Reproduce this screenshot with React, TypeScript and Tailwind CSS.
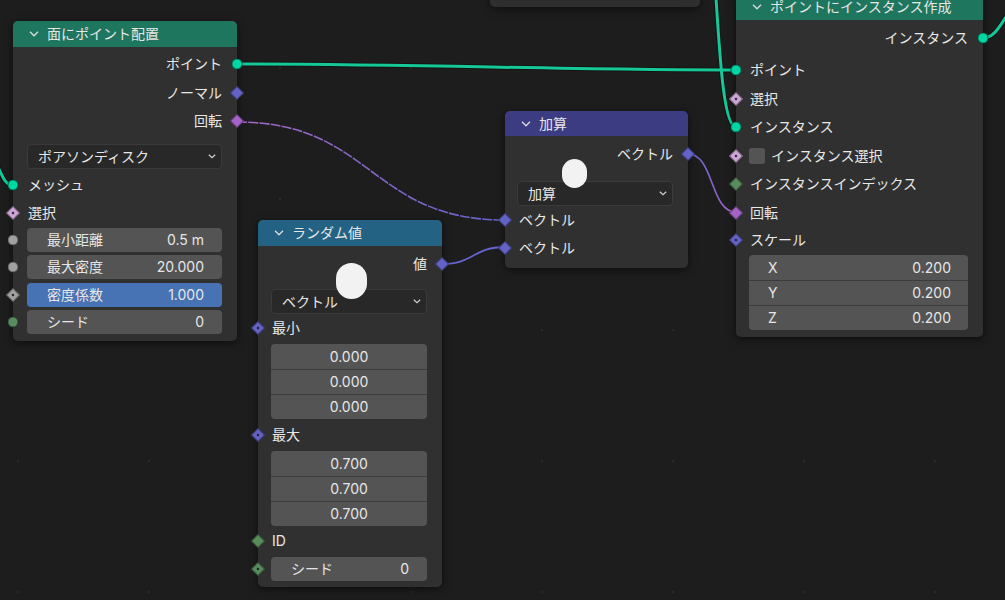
import React from 'react';

type SockProps = { side: 'l' | 'r'; shape: 'c' | 'd'; color: string; dot?: boolean };

function Sock({ side, shape, color, dot }: SockProps) {
  const pos = side === 'l' ? 'left-0 -translate-x-1/2' : 'right-0 translate-x-1/2';
  if (shape === 'c') {
    return (
      <span
        className={`absolute top-1/2 -translate-y-1/2 ${pos} w-[11px] h-[11px] rounded-full border border-black/50 ${color} z-20`}
      />
    );
  }
  return (
    <span className={`absolute top-1/2 -translate-y-1/2 ${pos} w-[14px] h-[14px] flex items-center justify-center z-20`}>
      <span className={`w-[10px] h-[10px] rotate-45 border border-black/40 ${color} flex items-center justify-center`}>
        {dot && <span className="w-[2px] h-[2px] bg-[#1a1a1a]" />}
      </span>
    </span>
  );
}

function Chevron() {
  return (
    <svg width="10" height="6" viewBox="0 0 10 6" className="shrink-0">
      <path d="M1 0.8 L5 4.8 L9 0.8" fill="none" stroke="#dcdcdc" strokeWidth="1.3" />
    </svg>
  );
}

function SmallChevron() {
  return (
    <svg width="8" height="5" viewBox="0 0 8 5" className="shrink-0">
      <path d="M0.8 0.8 L4 3.8 L7.2 0.8" fill="none" stroke="#cfcfcf" strokeWidth="1.2" />
    </svg>
  );
}

function Header({ title, color, h }: { title: string; color: string; h: string }) {
  return (
    <div className={`${h} ${color} rounded-t-[5px] flex items-center pl-[16px] gap-[8px] text-[#e6e6e6]`}>
      <Chevron />
      <span>{title}</span>
    </div>
  );
}

function Dropdown({ label }: { label: string }) {
  return (
    <div className="h-[25px] rounded-[4px] bg-[#282828] border border-[#3a3a3a] flex items-center justify-between pl-[10px] pr-[5px] text-[#e6e6e6]">
      <span>{label}</span>
      <SmallChevron />
    </div>
  );
}

function Field({ label, value, active }: { label: string; value: string; active?: boolean }) {
  return (
    <div
      className={`h-[24px] rounded-[4px] ${active ? 'bg-[#4772b3]' : 'bg-[#545454]'} flex items-center justify-between pl-[20px] pr-[18px] text-[#e6e6e6]`}
    >
      <span>{label}</span>
      <span>{value}</span>
    </div>
  );
}

function VecField({ vals, labels }: { vals: string[]; labels?: string[] }) {
  return (
    <div className="rounded-[4px] overflow-hidden bg-[#545454] flex flex-col text-[#e6e6e6]">
      {vals.map((v, i) => (
        <div
          key={i}
          className={`h-[25px] flex items-center ${labels ? 'justify-between pl-[19px] pr-[17px]' : 'justify-center'} ${i > 0 ? 'border-t border-[#3b3b3b]' : ''}`}
        >
          {labels && <span>{labels[i]}</span>}
          <span>{v}</span>
        </div>
      ))}
    </div>
  );
}

const nodeCls =
  "absolute rounded-[5px] bg-[#303030] shadow-[0_2px_8px_rgba(0,0,0,0.55)] text-[14px] text-[#e8e8e8] leading-none";

export default function App() {
  const dots: React.ReactElement[] = [];
  for (let x = 18; x < 1005; x += 131) {
    for (let y = 68; y < 600; y += 131) {
      dots.push(<circle key={`${x}-${y}`} cx={x} cy={y} r={1.2} fill="#2a2a2a" />);
    }
  }
  return (
    <div className="relative w-[1005px] h-[600px] overflow-hidden bg-[#1d1d1d] font-[Inter,'Noto_Sans_CJK_JP','Noto_Sans',sans-serif]">
      {/* links */}
      <svg className="absolute inset-0" width="1005" height="600" viewBox="0 0 1005 600">
        <defs>
          <linearGradient id="g1" gradientUnits="userSpaceOnUse" x1="237" y1="0" x2="505" y2="0">
            <stop offset="0" stopColor="#a366c7" />
            <stop offset="1" stopColor="#6464cc" />
          </linearGradient>
          <linearGradient id="g2" gradientUnits="userSpaceOnUse" x1="688" y1="0" x2="736" y2="0">
            <stop offset="0" stopColor="#6464cc" />
            <stop offset="1" stopColor="#a366c7" />
          </linearGradient>
        </defs>
        {dots}
        {/* green links */}
        <g fill="none" stroke="rgba(0,0,0,0.35)" strokeWidth="5">
          <path d="M237 64 C 420 64 560 70 736 70" />
          <path d="M716 -2 C 720 60 724 127 736 127" />
          <path d="M-6 158 C 3 178 5 185 13 185" />
          <path d="M983 38 C 995 38 1000 25 1012 8" />
        </g>
        <g fill="none" stroke="#14c898" strokeWidth="3">
          <path d="M237 64 C 420 64 560 70 736 70" />
          <path d="M716 -2 C 720 60 724 127 736 127" />
          <path d="M-6 158 C 3 178 5 185 13 185" />
          <path d="M983 38 C 995 38 1000 25 1012 8" />
        </g>
        {/* vector links */}
        <path d="M237 122 C 372 122 370 220 505 220" fill="none" stroke="url(#g1)" strokeWidth="1.6" strokeDasharray="10 1.2" />
        <path d="M442 264 C 474 264 473 247 505 247" fill="none" stroke="#6464cc" strokeWidth="1.8" />
        <path d="M688 154 C 714 154 710 212 736 212" fill="none" stroke="url(#g2)" strokeWidth="1.6" />
      </svg>

      {/* node at top (partially visible) */}
      <div className="absolute left-[490px] top-[-20px] w-[210px] h-[27px] rounded-[5px] bg-[#2e2e2e] shadow-[0_2px_8px_rgba(0,0,0,0.55)]" />

      {/* 面にポイント配置 */}
      <div className={`${nodeCls} left-[13px] top-[21px] w-[224px]`}>
        <Header title="面にポイント配置" color="bg-[#1e765f]" h="h-[26px]" />
        <div className="flex flex-col pt-[3px] pb-[7px]">
          <div className="relative h-[28.5px] flex items-center justify-end pr-[15px]">
            <span>ポイント</span>
            <Sock side="r" shape="c" color="bg-[#00d6a3]" />
          </div>
          <div className="relative h-[28.5px] flex items-center justify-end pr-[15px]">
            <span>ノーマル</span>
            <Sock side="r" shape="d" color="bg-[#6363c7]" />
          </div>
          <div className="relative h-[28.5px] flex items-center justify-end pr-[15px]">
            <span>回転</span>
            <Sock side="r" shape="d" color="bg-[#a663c7]" />
          </div>
          <div className="mt-[8.5px] pl-[14px] pr-[15px]">
            <Dropdown label="ポアソンディスク" />
          </div>
          <div className="relative mt-[2px] h-[28px] flex items-center pl-[15px]">
            <span>メッシュ</span>
            <Sock side="l" shape="c" color="bg-[#00d6a3]" />
          </div>
          <div className="relative h-[27px] flex items-center pl-[15px]">
            <span>選択</span>
            <Sock side="l" shape="d" color="bg-[#cca6d6]" dot />
          </div>
          <div className="mt-[2px] flex flex-col gap-[3.3px]">
            <div className="relative pl-[14px] pr-[15px]">
              <Field label="最小距離" value="0.5 m" />
              <Sock side="l" shape="c" color="bg-[#a1a1a1]" />
            </div>
            <div className="relative pl-[14px] pr-[15px]">
              <Field label="最大密度" value="20.000" />
              <Sock side="l" shape="c" color="bg-[#a1a1a1]" />
            </div>
            <div className="relative pl-[14px] pr-[15px]">
              <Field label="密度係数" value="1.000" active />
              <Sock side="l" shape="d" color="bg-[#a1a1a1]" dot />
            </div>
            <div className="relative pl-[14px] pr-[15px]">
              <Field label="シード" value="0" />
              <Sock side="l" shape="c" color="bg-[#598c5c]" />
            </div>
          </div>
        </div>
      </div>

      {/* ランダム値 */}
      <div className={`${nodeCls} left-[258px] top-[220px] w-[184px]`}>
        <Header title="ランダム値" color="bg-[#246283]" h="h-[26px]" />
        <div className="flex flex-col pt-[4px] pb-[6px]">
          <div className="relative h-[28px] flex items-center justify-end pr-[15px]">
            <span>値</span>
            <Sock side="r" shape="d" color="bg-[#6363c7]" />
          </div>
          <div className="mt-[11px] pl-[13px] pr-[15px]">
            <Dropdown label="ベクトル" />
          </div>
          <div className="relative h-[28px] flex items-center pl-[14px]">
            <span>最小</span>
            <Sock side="l" shape="d" color="bg-[#6363c7]" dot />
          </div>
          <div className="mt-[2px] pl-[13px] pr-[15px]">
            <VecField vals={['0.000', '0.000', '0.000']} />
          </div>
          <div className="relative mt-[2px] h-[28px] flex items-center pl-[14px]">
            <span>最大</span>
            <Sock side="l" shape="d" color="bg-[#6363c7]" dot />
          </div>
          <div className="mt-[2px] pl-[13px] pr-[15px]">
            <VecField vals={['0.700', '0.700', '0.700']} />
          </div>
          <div className="relative h-[29px] flex items-center pl-[14px]">
            <span>ID</span>
            <Sock side="l" shape="d" color="bg-[#598c5c]" />
          </div>
          <div className="relative mt-[2px] pl-[13px] pr-[15px]">
            <Field label="シード" value="0" />
            <Sock side="l" shape="d" color="bg-[#598c5c]" dot />
          </div>
        </div>
      </div>

      {/* 加算 */}
      <div className={`${nodeCls} left-[505px] top-[111px] w-[183px]`}>
        <Header title="加算" color="bg-[#3c3c83]" h="h-[25px]" />
        <div className="flex flex-col pt-[4px] pb-[7px]">
          <div className="relative h-[28px] flex items-center justify-end pr-[15px]">
            <span>ベクトル</span>
            <Sock side="r" shape="d" color="bg-[#6363c7]" />
          </div>
          <div className="mt-[13px] pl-[12px] pr-[15px]">
            <Dropdown label="加算" />
          </div>
          <div className="relative h-[28px] flex items-center pl-[14px]">
            <span>ベクトル</span>
            <Sock side="l" shape="d" color="bg-[#6363c7]" />
          </div>
          <div className="relative h-[27px] flex items-center pl-[14px]">
            <span>ベクトル</span>
            <Sock side="l" shape="d" color="bg-[#6363c7]" />
          </div>
        </div>
      </div>

      {/* ポイントにインスタンス作成 */}
      <div className={`${nodeCls} left-[736px] top-[-6px] w-[247px]`}>
        <Header title="ポイントにインスタンス作成" color="bg-[#1e765f]" h="h-[26px]" />
        <div className="flex flex-col pt-[4px] pb-[7px]">
          <div className="relative h-[28px] flex items-center justify-end pr-[15px]">
            <span>インスタンス</span>
            <Sock side="r" shape="c" color="bg-[#00d6a3]" />
          </div>
          <div className="relative mt-[4px] h-[28.5px] flex items-center pl-[14px]">
            <span>ポイント</span>
            <Sock side="l" shape="c" color="bg-[#00d6a3]" />
          </div>
          <div className="relative h-[28.5px] flex items-center pl-[14px]">
            <span>選択</span>
            <Sock side="l" shape="d" color="bg-[#cca6d6]" dot />
          </div>
          <div className="relative h-[28.5px] flex items-center pl-[14px]">
            <span>インスタンス</span>
            <Sock side="l" shape="c" color="bg-[#00d6a3]" />
          </div>
          <div className="relative h-[28.5px] flex items-center pl-[13px] gap-[6px]">
            <span className="w-[16px] h-[16px] rounded-[3px] bg-[#545454]" />
            <span>インスタンス選択</span>
            <Sock side="l" shape="d" color="bg-[#cca6d6]" dot />
          </div>
          <div className="relative h-[28.5px] flex items-center pl-[14px]">
            <span>インスタンスインデックス</span>
            <Sock side="l" shape="d" color="bg-[#598c5c]" />
          </div>
          <div className="relative h-[28.5px] flex items-center pl-[14px]">
            <span>回転</span>
            <Sock side="l" shape="d" color="bg-[#a663c7]" />
          </div>
          <div className="relative h-[26px] flex items-center pl-[14px]">
            <span>スケール</span>
            <Sock side="l" shape="d" color="bg-[#6363c7]" dot />
          </div>
          <div className="mt-[2px] pl-[13px] pr-[15px]">
            <VecField vals={['0.200', '0.200', '0.200']} labels={['X', 'Y', 'Z']} />
          </div>
        </div>
      </div>

      {/* white blobs */}
      <div className="absolute left-[336px] top-[263px] w-[31px] h-[36px] rounded-full bg-[#f2f2f2]" />
      <div className="absolute left-[562px] top-[159px] w-[25px] h-[29px] rounded-full bg-[#f2f2f2]" />
    </div>
  );
}
